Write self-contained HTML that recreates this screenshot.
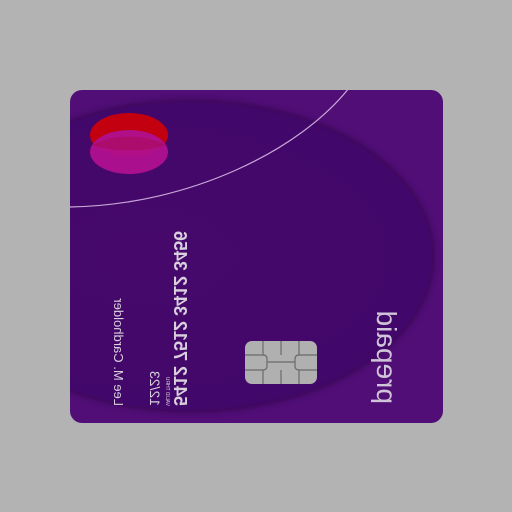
<!DOCTYPE html>
<html><head><style>
html,body{margin:0;padding:0;width:512px;height:512px;overflow:hidden;background:#b3b3b3;}
.card{position:absolute;left:70px;top:90px;width:373px;height:333px;border-radius:12px;overflow:hidden;background:#500e76;}
.ell{position:absolute;left:-120px;top:12px;width:482px;height:308px;border-radius:50%;background:radial-gradient(ellipse at 40% 50%,#46096b 0%,#42076a 70%,#38055a 100%);box-shadow:0 0 6px 2px rgba(40,0,60,.6);}
.t{position:absolute;font-family:"Liberation Sans",sans-serif;color:#d8d0dc;white-space:nowrap;transform-origin:0 0;}
</style></head><body>
<div class="card">
  <div class="ell"></div>
  <svg style="position:absolute;left:0;top:0" width="373" height="333">
    <path d="M0,117 C120,115 230,60 279,-2" stroke="#c9a8d8" stroke-width="1.2" fill="none"/>
    <ellipse cx="59" cy="45" rx="39" ry="22" fill="#c20010"/>
    <ellipse cx="59" cy="62" rx="39" ry="22" fill="#b0108f" opacity="0.95"/>
    <path d="M21,55 Q59,38 97,55 Q59,66 21,55Z" fill="#a80a50" opacity="0.5"/>
  </svg>
  <div style="position:absolute;left:175px;top:251px;width:72px;height:43px;border-radius:7px;background:#b0b0b0;"></div>
  <svg style="position:absolute;left:175px;top:251px" width="72" height="43">
    <g stroke="#6a6a6a" stroke-width="1.2" fill="none">
      <path d="M0,14 H18 Q22,14 22,18 V25 Q22,29 18,29 H0"/>
      <path d="M72,14 H54 Q50,14 50,18 V25 Q50,29 54,29 H72"/>
      <path d="M22,21 H50"/>
      <path d="M18,0 V14 M36,0 V14 M54,0 V14 M18,43 V29 M36,43 V29 M54,43 V29"/>
    </g>
  </svg>
  <div class="t" style="left:120px;top:316px;font-size:18px;letter-spacing:0px;font-weight:bold;transform:rotate(-90deg) scaleY(-1);">5412 7512 3412 3456</div>
  <div class="t" style="left:93px;top:316px;font-size:14px;transform:rotate(-90deg) scaleY(-1);">12/23</div>
  <div class="t" style="left:100px;top:316px;font-size:5px;transform:rotate(-90deg) scaleY(-1);">VALID THRU</div>
  <div class="t" style="left:56px;top:316px;font-size:13px;transform:rotate(-90deg) scaleY(-1);">Lee M. Cardholder</div>
  <div class="t" style="left:332px;top:314px;font-size:28px;color:#cfc4d8;transform:rotate(-90deg) scaleY(-1);">prepaid</div>
</div>
</body></html>
